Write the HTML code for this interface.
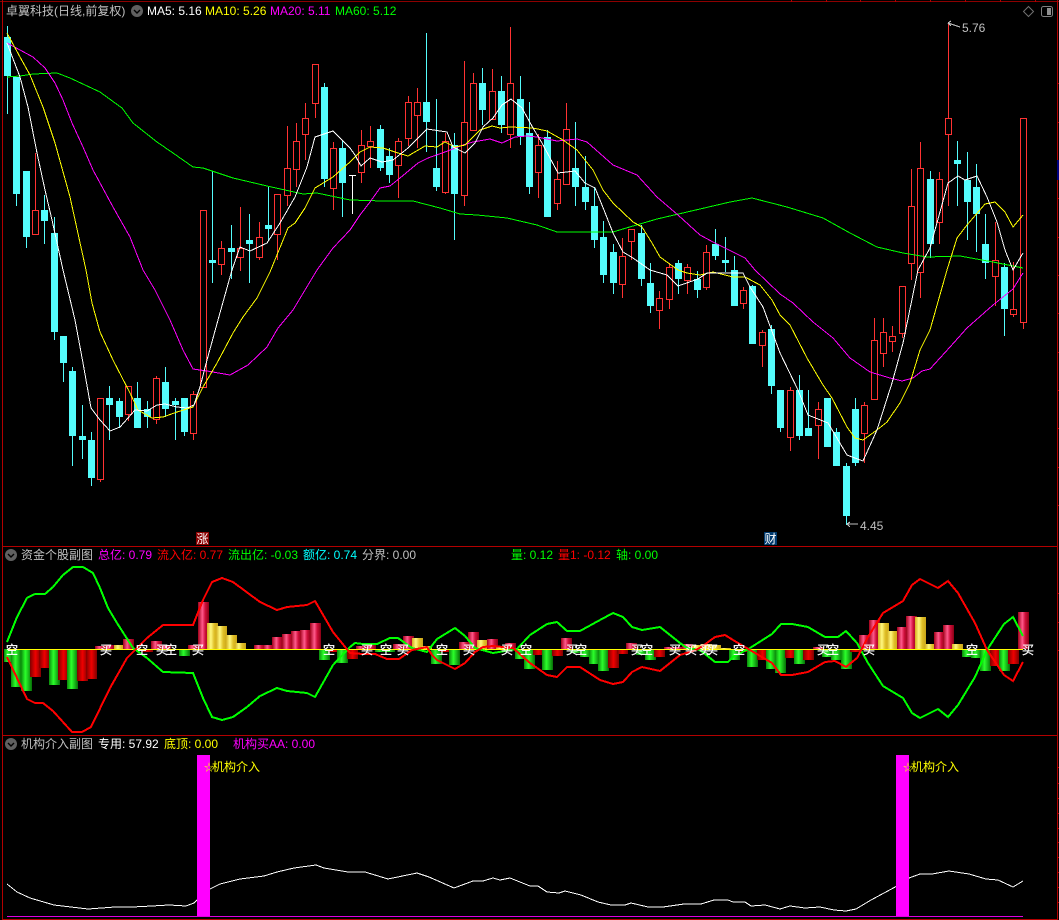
<!DOCTYPE html>
<html lang="zh"><head><meta charset="utf-8"><title>卓翼科技</title>
<style>
html,body{margin:0;padding:0;background:#000;width:1059px;height:920px;overflow:hidden}
svg{display:block}
text{font-family:"Liberation Sans","WenQuanYi Zen Hei","Noto Sans CJK SC",sans-serif;font-size:12px}
.b rect{width:11px;shape-rendering:crispEdges}
.g{fill:url(#g)}.r{fill:url(#r)}.p{fill:url(#p)}.y{fill:url(#y)}
.l text{fill:#fff;stroke:#fff;stroke-width:.25;text-anchor:middle}
</style></head><body>
<svg xmlns="http://www.w3.org/2000/svg" width="1059" height="920" viewBox="0 0 1059 920">
<defs>
<linearGradient id="g"><stop offset="0" stop-color="#0a8a0a"/><stop offset=".4" stop-color="#2bff2b"/><stop offset="1" stop-color="#067006"/></linearGradient>
<linearGradient id="r"><stop offset="0" stop-color="#800000"/><stop offset=".5" stop-color="#f00000"/><stop offset="1" stop-color="#800000"/></linearGradient>
<linearGradient id="p"><stop offset="0" stop-color="#a00018"/><stop offset=".4" stop-color="#ff5a8c"/><stop offset=".65" stop-color="#d0103c"/><stop offset="1" stop-color="#8a0014"/></linearGradient>
<linearGradient id="y"><stop offset="0" stop-color="#d4ae1c"/><stop offset=".35" stop-color="#fff880"/><stop offset=".65" stop-color="#e0c028"/><stop offset="1" stop-color="#c8a418"/></linearGradient>
</defs>
<rect width="1059" height="920" fill="#000"/>

<!-- frame -->
<g fill="#b30000" shape-rendering="crispEdges">
<rect x="0" y="1" width="1059" height="1" fill="#8c0000"/>
<rect x="2" y="0" width="1" height="920"/>
<rect x="1057" y="0" width="1" height="920"/>
<rect x="2" y="546" width="1055" height="1"/>
<rect x="2" y="735" width="1055" height="1"/>
<rect x="2" y="919" width="1055" height="1"/>
</g>
<path shape-rendering="crispEdges" stroke="#b30000" fill="none" d="M791.5 0V2M826.5 0V2M860.5 0V2M895.5 0V2M930.5 0V2M965.5 0V2M1000.5 0V2M1035.5 0V2M1057 83.5h2M1057 122.5h2M1057 198.5h2M1057 237.5h2M1057 275.5h2M1057 313.5h2M1057 352.5h2M1057 390.5h2M1057 428.5h2M1057 467.5h2M1057 505.5h2M1057 593.5h2M1057 622.5h2M1057 650.5h2M1057 767.5h2M1057 783.5h2M1057 798.5h2M1057 813.5h2M1057 828.5h2M1057 842.5h2M1057 857.5h2M1057 872.5h2M1057 887.5h2M1057 902.5h2"/>
<rect x="1057" y="160" width="2" height="20" fill="#000080"/>

<!-- candles cyan -->
<g fill="none" shape-rendering="crispEdges">
<path stroke="#54fcfc" stroke-width="1" d="M7.5 26V114M16.5 77V206M26.5 171V248M44.5 195V244M54.5 217V340M63.5 336V382M72.5 367V466M82.5 405V459M91.5 432V486M109.5 386V440M119.5 398V428M137.5 382V428M147.5 401V428M165.5 367V417M175.5 398V440M184.5 398V436M212.5 171V283M231.5 225V279M249.5 214V283M268.5 186V241M324.5 83V187M342.5 141V217M380.5 125V171M389.5 148V183M426.5 33V152M436.5 99V191M454.5 133V240M482.5 68V125M501.5 76V133M520.5 76V145M529.5 102V194M547.5 130V217M575.5 122V206M585.5 156V210M594.5 187V248M603.5 221V283M613.5 244V294M641.5 225V286M650.5 263V313M678.5 260V294M697.5 271V298M715.5 229V260M725.5 237V272M734.5 256V306M752.5 285V344M771.5 325V394M780.5 390V432M799.5 375V440M808.5 390V436M827.5 398V447M836.5 428V466M846.5 463V525M855.5 398V466M930.5 171V258M957.5 141V206M967.5 152V240M976.5 164V252M985.5 214V279M1004.5 263V336"/>
<path stroke="#54fcfc" stroke-width="7" d="M7.5 37V76M16.5 77V194M26.5 171V237M44.5 210V221M54.5 233V332M63.5 336V363M72.5 371V436M82.5 436V440M91.5 440V478M109.5 398V405M119.5 401V417M137.5 398V428M147.5 409V417M165.5 382V409M175.5 401V405M184.5 398V432M212.5 260V263M231.5 248V252M249.5 240V244M268.5 225V229M324.5 87V179M342.5 148V183M380.5 129V168M389.5 156V175M426.5 102V122M436.5 168V187M454.5 145V194M482.5 83V110M501.5 91V125M520.5 99V136M529.5 133V187M547.5 137V217M575.5 168V187M585.5 187V202M594.5 206V240M603.5 237V275M613.5 252V283M641.5 233V279M650.5 283V306M678.5 263V279M697.5 279V290M715.5 244V256M725.5 260V263M734.5 270V306M752.5 286V344M771.5 329V386M780.5 390V428M799.5 390V436M808.5 428V436M827.5 398V447M836.5 432V466M846.5 466V516M855.5 409V463M930.5 179V244M957.5 160V164M967.5 180V202M976.5 187V214M985.5 244V263M1004.5 267V309"/>
<path stroke="#ff3232" stroke-width="1" d="M35.5 153V210M32.5 210.5h6v24h-6zM100.5 479V482M97.5 398.5h6v81h-6zM128.5 414V421M125.5 386.5h6v28h-6zM156.5 376V378M156.5 419V424M153.5 378.5h6v41h-6zM193.5 391V394M193.5 433V440M190.5 394.5h6v39h-6zM200.5 210.5h6v177h-6zM221.5 241V248M221.5 264V275M218.5 248.5h6v16h-6zM240.5 207V248M240.5 257V271M237.5 248.5h6v9h-6zM259.5 222V237M259.5 257V260M256.5 237.5h6v20h-6zM277.5 234V260M274.5 194.5h6v40h-6zM287.5 126V168M287.5 195V206M284.5 168.5h6v27h-6zM296.5 123V141M296.5 169V187M293.5 141.5h6v28h-6zM305.5 103V118M305.5 134V160M302.5 118.5h6v16h-6zM315.5 103V118M312.5 64.5h6v39h-6zM333.5 142V148M333.5 188V210M330.5 148.5h6v40h-6zM361.5 130V145M361.5 172V183M358.5 145.5h6v27h-6zM370.5 126V141M370.5 146V168M367.5 141.5h6v5h-6zM398.5 138V141M398.5 165V198M395.5 141.5h6v24h-6zM408.5 96V102M408.5 138V146M405.5 102.5h6v36h-6zM417.5 88V102M417.5 115V148M414.5 102.5h6v13h-6zM445.5 133V141M445.5 192V194M442.5 141.5h6v51h-6zM464.5 61V122M464.5 195V206M461.5 122.5h6v73h-6zM473.5 73V83M470.5 83.5h6v47h-6zM492.5 69V91M489.5 91.5h6v28h-6zM510.5 27V83M510.5 134V148M507.5 83.5h6v51h-6zM538.5 134V145M538.5 172V198M535.5 145.5h6v27h-6zM557.5 161V179M557.5 203V210M554.5 179.5h6v24h-6zM566.5 103V129M563.5 129.5h6v55h-6zM622.5 238V256M622.5 284V298M619.5 256.5h6v28h-6zM631.5 241V260M628.5 229.5h6v12h-6zM659.5 291V298M659.5 310V329M656.5 298.5h6v12h-6zM669.5 263V267M669.5 299V309M666.5 267.5h6v32h-6zM687.5 264V267M687.5 280V294M684.5 267.5h6v13h-6zM706.5 245V252M706.5 287V290M703.5 252.5h6v35h-6zM743.5 287V290M743.5 303V309M740.5 290.5h6v13h-6zM762.5 330V332M762.5 345V367M759.5 332.5h6v13h-6zM790.5 387V390M790.5 437V451M787.5 390.5h6v47h-6zM818.5 402V409M818.5 425V459M815.5 409.5h6v16h-6zM864.5 402V405M864.5 433V463M861.5 405.5h6v28h-6zM874.5 318V340M871.5 340.5h6v59h-6zM883.5 318V332M883.5 353V367M880.5 332.5h6v21h-6zM892.5 326V336M892.5 341V352M889.5 336.5h6v5h-6zM902.5 333V338M899.5 286.5h6v47h-6zM911.5 169V206M911.5 263V280M908.5 206.5h6v57h-6zM920.5 142V168M920.5 272V298M917.5 168.5h6v104h-6zM939.5 172V179M939.5 222V244M936.5 179.5h6v43h-6zM948.5 24V118M948.5 134V206M945.5 118.5h6v16h-6zM995.5 222V260M995.5 276V306M992.5 260.5h6v16h-6zM1013.5 262V309M1013.5 314V317M1010.5 309.5h6v5h-6zM1023.5 322V329M1020.5 118.5h6v204h-6z"/>
<path stroke="#fff" d="M352.5 175V214M349 175.5h7"/>

<!-- MA lines -->
<polyline stroke="#00ff00" points="7,77 20,76 33,74 57,73 70,78 100,92 122,108 133,123 157,142 173,153 193,167 203,168 233,178 267,186 303,194 317,193 350,200 383,201 413,201 440,208 460,214 477,215 507,218 537,225 557,232 583,232 613,232 633,226 657,219 700,209 730,202 752,198 787,207 823,218 850,233 877,247 903,253 927,257 960,256 993,262 1023,268"/>
<polyline stroke="#ff00ff" points="7,43 20,50 33,57 45,68 55,83 63,100 72,123 83,147 93,170 113,207 130,237 143,270 155,290 170,320 183,350 193,369 207,371 230,375 248,365 267,347 278,328 293,310 317,270 333,248 350,230 360,215 370,202 380,188 390,186 400,178 418,163 428,158 445,152 463,145 473,142 490,139 502,143 515,137 527,136 537,137 557,141 577,139 587,142 613,165 637,175 657,197 678,215 700,235 713,242 733,252 745,258 755,270 780,294 793,303 813,322 833,338 850,358 870,372 890,378 902,381 913,378 922,371 930,369 950,347 967,328 993,305 1013,289 1023,273"/>
<polyline stroke="#ffff00" points="7,33 20,57 30,75 43,107 55,143 70,197 86,270 92,303 100,332 113,360 130,393 138,410 152,418 163,417 177,412 193,407 203,387 217,363 233,333 243,317 257,298 270,272 288,228 295,223 305,208 315,188 333,177 350,162 360,152 370,147 383,148 398,153 408,156 425,146 437,147 445,142 455,147 465,145 480,130 492,126 500,128 510,127 533,128 547,131 563,140 577,150 593,170 603,190 613,203 633,222 642,227 652,243 660,257 678,270 687,273 700,275 713,272 733,277 745,277 760,285 772,300 780,315 790,325 807,358 823,385 832,398 847,427 855,438 863,440 877,430 887,422 900,403 910,383 920,350 930,330 947,270 957,238 967,225 985,204 995,202 1005,212 1013,227 1023,215"/>
<polyline stroke="#ffffff" points="7,43 20,77 28,107 37,153 45,190 52,220 63,270 75,320 83,363 91,408 100,420 110,431 120,427 128,418 135,410 147,411 157,405 165,404 177,407 187,408 194,405 200,387 207,360 218,320 230,277 233,267 240,247 250,251 267,243 280,223 295,197 307,167 315,137 333,131 350,148 355,155 361,166 370,158 382,162 393,160 408,148 427,129 447,132 453,147 465,153 475,143 483,127 493,118 502,105 511,99 522,108 533,128 542,143 558,173 575,171 585,183 595,188 604,210 613,233 623,252 633,258 650,270 667,275 678,286 698,279 707,273 743,273 750,287 763,307 780,353 798,390 808,415 828,423 847,455 863,461 877,430 892,383 903,343 918,270 930,248 948,183 958,176 965,180 977,176 987,197 997,222 1005,250 1013,270 1023,253"/>
</g>

<!-- annotations -->
<path d="M948 23l12 4M948 23l3-2M948 23l3 3" stroke="#c0c0c0" fill="none" shape-rendering="crispEdges"/>
<text x="962" y="32" fill="#c0c0c0">5.76</text>
<path d="M847 524h11M847 524l3-2M847 524l3 3" stroke="#c0c0c0" fill="none" shape-rendering="crispEdges"/>
<text x="860" y="530" fill="#c0c0c0">4.45</text>
<rect x="196" y="532" width="13" height="13" fill="#8b0000"/>
<text x="196.5" y="543" fill="#fff">涨</text>
<rect x="764" y="532" width="13" height="13" fill="#003a6e"/>
<text x="764.5" y="543" fill="#fff">财</text>

<!-- header 1 -->
<text x="6" y="15" fill="#c0c0c0">卓翼科技(日线,前复权)</text>
<circle cx="137" cy="11" r="6" fill="#606060"/><path d="M134 10l3 3 3-3" stroke="#000" fill="none" stroke-width="1.4"/>
<text x="147" y="15" fill="#fff" xml:space="preserve">MA5: 5.16</text>
<text x="205" y="15" fill="#ffff00" xml:space="preserve">MA10: 5.26</text>
<text x="270" y="15" fill="#ff00ff" xml:space="preserve">MA20: 5.11</text>
<text x="335" y="15" fill="#00ff00" xml:space="preserve">MA60: 5.12</text>
<path d="M1028.5 6.5l5 5-5 5-5-5z" stroke="#707070" fill="none"/>
<rect x="1041.5" y="6.5" width="11" height="10" rx="2" stroke="#808080" fill="none"/><rect x="1047" y="8" width="4" height="7" fill="#909090"/>

<!-- panel 2 bars -->
<g class="b">
<rect class="g" x="4" y="649" height="13" style="width:9px"/><rect class="g" x="11" y="649" height="38"/><rect class="g" x="21" y="649" height="42"/><rect class="r" x="30" y="649" height="28"/><rect class="r" x="39" y="649" height="19"/><rect class="g" x="49" y="649" height="36"/><rect class="r" x="58" y="649" height="31"/><rect class="g" x="67" y="649" height="40"/><rect class="r" x="77" y="649" height="32"/><rect class="r" x="86" y="649" height="30"/>
<rect class="p" x="95" y="646" height="3"/><rect class="p" x="104" y="645" height="4"/><rect class="y" x="114" y="645" height="4"/><rect class="p" x="123" y="639" height="10"/><rect class="r" x="142" y="649" height="3"/><rect class="p" x="151" y="641" height="8"/><rect class="p" x="160" y="645" height="4"/><rect class="g" x="179" y="649" height="7"/><rect class="p" x="188" y="645" height="4"/><rect class="p" x="198" y="602" height="47"/>
<rect class="y" x="207" y="623" height="26"/><rect class="y" x="216" y="626" height="23"/><rect class="y" x="226" y="635" height="14"/><rect class="y" x="235" y="643" height="6"/><rect class="p" x="254" y="645" height="4"/><rect class="p" x="263" y="645" height="4"/><rect class="p" x="272" y="637" height="12"/><rect class="p" x="282" y="634" height="15"/><rect class="p" x="291" y="631" height="18"/><rect class="p" x="300" y="630" height="19"/><rect class="p" x="310" y="623" height="26"/>
<rect class="g" x="319" y="649" height="11"/><rect class="r" x="328" y="649" height="3"/><rect class="g" x="337" y="649" height="14"/><rect class="r" x="347" y="649" height="10"/><rect class="p" x="356" y="646" height="3"/><rect class="p" x="365" y="643" height="6"/><rect class="g" x="375" y="649" height="3"/><rect class="g" x="384" y="649" height="3"/><rect class="p" x="393" y="644" height="5"/><rect class="p" x="403" y="636" height="13"/><rect class="y" x="412" y="638" height="11"/><rect class="y" x="421" y="646" height="3"/>
<rect class="g" x="431" y="649" height="15"/><rect class="r" x="440" y="649" height="3"/><rect class="g" x="449" y="649" height="16"/><rect class="p" x="459" y="642" height="7"/><rect class="p" x="468" y="632" height="17"/><rect class="y" x="477" y="640" height="9"/><rect class="p" x="487" y="639" height="10"/><rect class="y" x="496" y="647" height="2"/><rect class="p" x="505" y="643" height="6"/><rect class="g" x="515" y="649" height="10"/><rect class="g" x="524" y="649" height="20"/><rect class="r" x="533" y="649" height="6"/><rect class="g" x="542" y="649" height="21"/><rect class="r" x="552" y="649" height="7"/><rect class="p" x="561" y="638" height="11"/>
<rect class="g" x="570" y="649" height="4"/><rect class="g" x="580" y="649" height="8"/><rect class="g" x="589" y="649" height="15"/><rect class="g" x="598" y="649" height="22"/><rect class="r" x="608" y="649" height="19"/><rect class="r" x="617" y="649" height="5"/><rect class="p" x="626" y="643" height="6"/><rect class="g" x="636" y="649" height="6"/><rect class="g" x="645" y="649" height="11"/><rect class="r" x="654" y="649" height="8"/><rect class="p" x="664" y="647" height="2"/><rect class="p" x="673" y="647" height="2"/><rect class="p" x="682" y="644" height="5"/><rect class="y" x="692" y="645" height="4"/><rect class="y" x="701" y="644" height="5"/><rect class="y" x="710" y="645" height="4"/><rect class="y" x="720" y="648" height="1"/>
<rect class="g" x="729" y="649" height="11"/><rect class="r" x="738" y="649" height="3"/><rect class="g" x="747" y="649" height="18"/><rect class="r" x="757" y="649" height="11"/><rect class="g" x="766" y="649" height="20"/><rect class="g" x="775" y="649" height="24"/><rect class="r" x="785" y="649" height="9"/><rect class="g" x="794" y="649" height="15"/><rect class="r" x="803" y="649" height="11"/><rect class="p" x="813" y="647" height="2"/><rect class="g" x="822" y="649" height="8"/><rect class="g" x="831" y="649" height="11"/><rect class="g" x="841" y="649" height="20"/><rect class="r" x="850" y="649" height="3"/>
<rect class="p" x="859" y="635" height="14"/><rect class="p" x="869" y="620" height="29"/><rect class="y" x="878" y="623" height="26"/><rect class="y" x="887" y="631" height="18"/><rect class="p" x="897" y="627" height="22"/><rect class="p" x="906" y="616" height="33"/><rect class="y" x="915" y="617" height="32"/><rect class="y" x="925" y="644" height="5"/><rect class="p" x="934" y="632" height="17"/><rect class="p" x="943" y="625" height="24"/><rect class="y" x="952" y="644" height="5"/>
<rect class="g" x="962" y="649" height="8"/><rect class="g" x="971" y="649" height="9"/><rect class="g" x="980" y="649" height="22"/><rect class="r" x="990" y="649" height="17"/><rect class="g" x="999" y="649" height="22"/><rect class="r" x="1008" y="649" height="15"/><rect class="p" x="1018" y="612" height="37"/>
</g>
<path d="M7 649.5H1023" stroke="#ffff00" shape-rendering="crispEdges"/>

<!-- panel 2 lines -->
<g fill="none" stroke-width="2" shape-rendering="crispEdges">
<polyline stroke="#00ff00" points="7,642 17,617 27,598 35,594 45,594 53,587 63,575 73,567 83,567 93,573 100,588 108,608 117,623 133,648 147,658 163,672 193,673 203,698 212,717 222,720 233,717 247,707 260,696 277,688 287,691 307,693 315,697 333,665 350,647 355,643 363,644 377,644 390,638 398,638 412,648 427,652 437,639 455,628 465,636 475,648 493,653 517,649 530,635 547,624 557,622 567,631 580,631 600,620 613,613 623,617 632,627 642,630 660,627 680,643 687,648 700,650 715,662 728,662 733,657 750,648 772,634 781,624 792,624 808,627 825,637 838,637 846,631 857,643 868,663 883,686 903,698 912,713 920,718 938,709 948,717 958,705 975,677 987,650 1004,624 1013,617 1023,636"/>
<polyline stroke="#ff0000" points="7,657 17,678 27,699 35,703 43,703 53,711 72,732 82,732 91,727 110,688 127,658 133,652 147,638 163,625 193,625 203,600 212,582 222,578 233,582 260,602 277,610 287,607 307,605 315,601 333,632 350,653 363,654 375,654 387,659 399,659 412,650 427,647 432,655 437,660 455,669 465,663 475,652 483,647 493,646 513,648 530,663 547,675 557,677 567,667 580,667 600,680 613,684 623,682 632,672 642,667 660,671 680,655 693,651 700,648 715,637 725,635 733,640 750,650 772,663 781,675 792,675 808,672 825,662 835,661 846,667 857,658 868,637 883,613 903,601 912,585 920,579 938,588 948,581 958,593 975,623 987,650 1004,675 1013,681 1023,662"/>
</g>

<!-- signals -->
<g class="l">
<text x="12" y="654">空</text><text x="106" y="654">买</text><text x="142" y="654">空</text><text x="162" y="654">买</text><text x="171" y="654">空</text><text x="198" y="654">买</text><text x="329" y="654">空</text><text x="367" y="654">买</text><text x="386" y="654">空</text><text x="403" y="654">买</text><text x="442" y="654">空</text><text x="469" y="654">买</text><text x="507" y="654">买</text><text x="526" y="654">空</text><text x="572" y="654">买</text><text x="581" y="654">空</text><text x="637" y="654">买</text><text x="647" y="654">空</text><text x="675" y="654">买</text><text x="691" y="654">买</text><text x="705" y="654">买</text><text x="712" y="654">买</text><text x="739" y="654">空</text><text x="823" y="654">买</text><text x="833" y="654">空</text><text x="869" y="654">买</text><text x="972" y="654">空</text><text x="1028" y="654">买</text>
</g>

<!-- header 2 -->
<circle cx="11" cy="555" r="6" fill="#606060"/><path d="M8 554l3 3 3-3" stroke="#000" fill="none" stroke-width="1.4"/>
<text x="21" y="559" fill="#c0c0c0">资金个股副图</text>
<text x="98" y="559" fill="#ff00ff" xml:space="preserve">总亿: 0.79</text>
<text x="157" y="559" fill="#ff0000" xml:space="preserve">流入亿: 0.77</text>
<text x="228" y="559" fill="#00ff00" xml:space="preserve">流出亿: -0.03</text>
<text x="303" y="559" fill="#00ffff" xml:space="preserve">额亿: 0.74</text>
<text x="362" y="559" fill="#c0c0c0" xml:space="preserve">分界: 0.00</text>
<text x="511" y="559" fill="#00ff00" xml:space="preserve">量: 0.12</text>
<text x="558" y="559" fill="#ff0000" xml:space="preserve">量1: -0.12</text>
<text x="616" y="559" fill="#00ff00" xml:space="preserve">轴: 0.00</text>

<!-- panel 3 -->
<circle cx="11" cy="744" r="6" fill="#606060"/><path d="M8 743l3 3 3-3" stroke="#000" fill="none" stroke-width="1.4"/>
<text x="21" y="748" fill="#c0c0c0">机构介入副图</text>
<text x="98" y="748" fill="#fff" xml:space="preserve">专用: 57.92</text>
<text x="164" y="748" fill="#ffff00" xml:space="preserve">底顶: 0.00</text>
<text x="233" y="748" fill="#ff00ff" xml:space="preserve">机构买AA: 0.00</text>
<polyline fill="none" stroke="#fff" shape-rendering="crispEdges" points="7,884 17,892 30,898 54,905 88,909 115,907 132,907 152,906 169,905 186,906 194,903 197,900 210,889 220,884 240,879 264,876 277,872 294,868 316,865 324,868 348,872 365,872 388,879 417,873 429,877 454,888 473,881 483,881 493,878 500,880 510,878 530,886 538,886 547,892 559,893 565,891 581,895 598,902 611,905 625,905 631,903 648,907 663,907 684,904 701,904 714,900 728,900 733,902 745,902 751,906 765,905 780,909 790,906 805,908 820,907 834,910 846,911 856,909 871,900 897,886 909,878 920,874 932,874 949,871 969,874 986,879 998,880 1013,887 1023,881"/>
<rect x="197" y="755" width="13" height="162" fill="#ff00ff"/>
<rect x="896" y="755" width="13" height="162" fill="#ff00ff"/>
<rect x="7" y="916" width="1016" height="1" fill="#e000e0"/>
<text x="204" y="771" fill="#ffff00" style="font-size:10px">☆</text><text x="212" y="771" fill="#ffff00">机构介入</text>
<text x="903" y="771" fill="#ffff00" style="font-size:10px">☆</text><text x="911" y="771" fill="#ffff00">机构介入</text>
</svg>
</body></html>
